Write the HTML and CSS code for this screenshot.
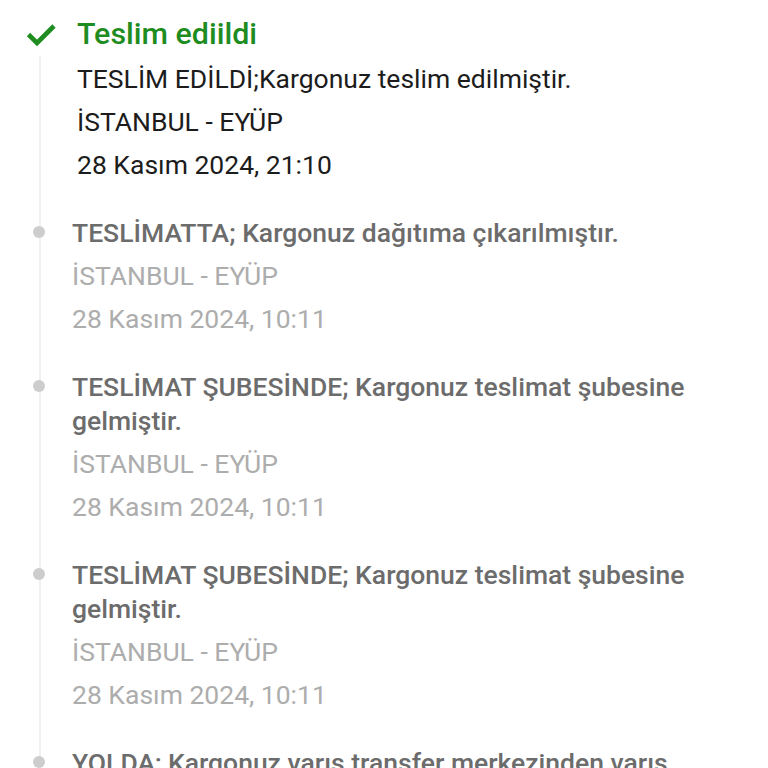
FILE: index.html
```html
<!DOCTYPE html>
<html lang="tr">
<head>
<meta charset="utf-8">
<link rel="stylesheet" href="styles.css">
</head>
<body>
<div class="timeline">
  <div class="item item-done">
    <div class="marker marker-check">
      <svg width="30" height="24" viewBox="0 0 30 24"><path d="M2.5 10.5 L11 19 L28 2" fill="none" stroke="#1f8c1f" stroke-width="4.6"/></svg>
    </div>
    <div class="content">
      <div class="title-done">Teslim ediildi</div>
      <div class="line line-first">TESLİM EDİLDİ;Kargonuz teslim edilmiştir.</div>
      <div class="line">İSTANBUL - EYÜP</div>
      <div class="line">28 Kasım 2024, 21:10</div>
    </div>
  </div>
  <div class="item">
    <div class="marker"><span class="dot"></span></div>
    <div class="content">
      <div class="title">TESLİMATTA; Kargonuz dağıtıma çıkarılmıştır.</div>
      <div class="sub">İSTANBUL - EYÜP</div>
      <div class="sub">28 Kasım 2024, 10:11</div>
    </div>
  </div>
  <div class="item">
    <div class="marker"><span class="dot"></span></div>
    <div class="content">
      <div class="title">TESLİMAT ŞUBESİNDE; Kargonuz teslimat şubesine gelmiştir.</div>
      <div class="sub">İSTANBUL - EYÜP</div>
      <div class="sub">28 Kasım 2024, 10:11</div>
    </div>
  </div>
  <div class="item">
    <div class="marker"><span class="dot"></span></div>
    <div class="content">
      <div class="title">TESLİMAT ŞUBESİNDE; Kargonuz teslimat şubesine gelmiştir.</div>
      <div class="sub">İSTANBUL - EYÜP</div>
      <div class="sub">28 Kasım 2024, 10:11</div>
    </div>
  </div>
  <div class="item">
    <div class="marker"><span class="dot"></span></div>
    <div class="content">
      <div class="title">YOLDA; Kargonuz varış transfer merkezinden varış şubesine gönderilmiştir.</div>
      <div class="sub">İSTANBUL - EYÜP</div>
      <div class="sub">28 Kasım 2024, 03:42</div>
    </div>
  </div>
</div>
</body>
</html>
```
FILE: styles.css
```css
html, body {
  margin: 0;
  padding: 0;
  background: #ffffff;
  height: 100%;
  overflow: hidden;
}
body {
  font-family: Roboto, "Liberation Sans", sans-serif;
  font-size: 26.5px;
}
.timeline {
  display: flex;
  flex-direction: column;
  gap: 34px;
  padding: 17px 20px 0 0;
  background: linear-gradient(#f1f1f1, #f1f1f1) no-repeat 39px 56px / 2px 100%;
}
.item {
  display: flex;
  align-items: flex-start;
}
.marker {
  flex: 0 0 72px;
  display: flex;
}
.marker-check {
  flex-basis: 77px;
  padding: 7px 0 0 26px;
  box-sizing: border-box;
}
.dot {
  width: 12px;
  height: 12px;
  border-radius: 50%;
  background: #cdcdcd;
  margin: 10px 0 0 33px;
}
.content {
  flex: 1;
  min-width: 0;
}
.title-done {
  font-size: 30.4px;
  font-weight: 500;
  line-height: 34px;
  color: #1f8c1f;
}
.line {
  line-height: 34px;
  margin-top: 9px;
  color: #1c1c1c;
}
.line-first {
  margin-top: 11px;
}
.title {
  font-weight: 500;
  line-height: 34px;
  color: #6c6c6c;
}
.sub {
  line-height: 34px;
  margin-top: 9px;
  color: #adadad;
}
```
